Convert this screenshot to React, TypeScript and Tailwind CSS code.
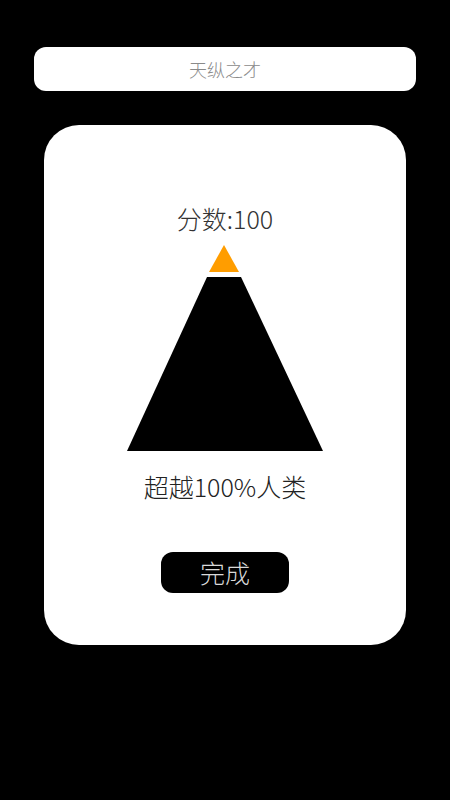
export default function App() {
  return (
    <div
      className="w-[450px] h-[800px] bg-black overflow-hidden"
      style={{ fontFamily: '"Noto Sans CJK SC", "Noto Sans", sans-serif' }}
    >
      {/* title bar */}
      <div className="mx-[34px] mt-[47px] h-[44px] rounded-[12px] bg-white flex items-center justify-center">
        <span className="text-[18px] font-light text-[#8a8a8a]">天纵之才</span>
      </div>

      {/* result card */}
      <div className="mx-[44px] mt-[34px] h-[520px] rounded-[35px] bg-white flex flex-col items-center pt-[77px]">
        <div className="text-[25px] leading-[33px] font-light text-[#333]">分数:100</div>

        <svg width="196" height="206" viewBox="0 0 196 206" className="mt-[10px]">
          <polygon points="97,0 112,27 82,27" fill="#ff9d00" />
          <polygon points="80,32 114,32 196,206 0,206" fill="#000" />
        </svg>

        <div className="mt-[19px] text-[25px] leading-[33px] font-light text-[#222]">
          超越100%人类
        </div>

        <button className="mt-[49px] w-[128px] h-[41px] rounded-[12px] bg-black flex items-center justify-center">
          <span className="text-[25px] font-light text-[#d9d9d9]">完成</span>
        </button>
      </div>
    </div>
  );
}
